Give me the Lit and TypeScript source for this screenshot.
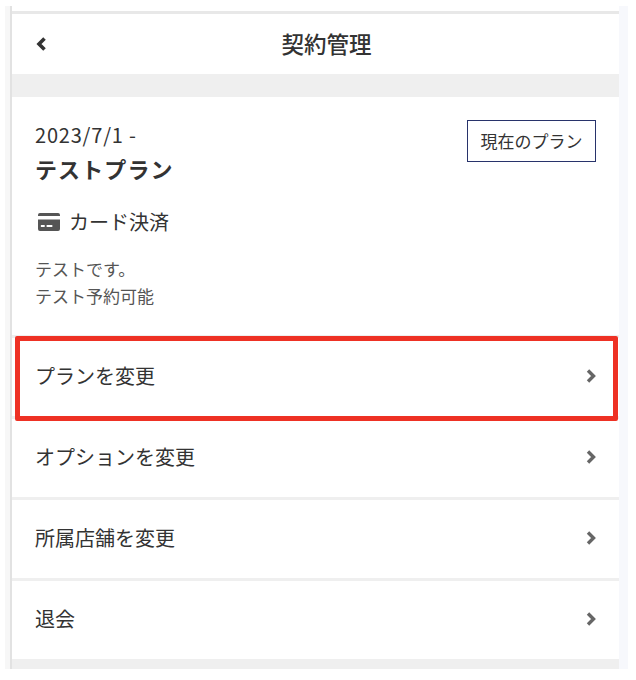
import { LitElement, html, css, svg } from "lit";
import { customElement } from "lit/decorators.js";

@customElement("app-root")
export class AppRoot extends LitElement {
  static styles = css`
    :host { display: block; width: 636px; height: 680px; background: #fff; font-family: "Noto Sans CJK JP", "Noto Sans", sans-serif; color: #333; position: relative; overflow: hidden; }
    .frame { display: flex; padding: 6px 8px 11px 5px; height: 680px; box-sizing: border-box; }
    .gutter-l { width: 5px; background: #f7f7f7; }
    .line-l { width: 2px; background: #e2e2e2; }
    .gutter-r { width: 9px; background: #f7f8fc; }
    .page { width: 607px; padding-top: 5px; display: flex; flex-direction: column; background: #fff; }
    .top { height: 3px; background: #e8e8e8; flex: none; }
    .head { height: 60px; flex: none; box-sizing: border-box; padding: 0 0 2px 22px; display: flex; align-items: center; justify-content: center; position: relative; font-size: 22.5px; font-weight: 500; color: #333; }
    .back { position: absolute; left: 22px; top: 22px; width: 14px; height: 16px; }
    .band { background: #efefef; height: 23px; flex: none; }
    .card { height: 238px; flex: none; box-sizing: border-box; padding: 22px 23px 0; position: relative; }
    .date { font-size: 20px; line-height: 32px; letter-spacing: 0.8px; color: #333; }
    .name { font-size: 22px; font-weight: 700; line-height: 34px; letter-spacing: 1.1px; }
    .pay { display: flex; align-items: center; gap: 9px; font-size: 20px; line-height: 32px; margin: 21px 0 0 3px; }
    .note { font-size: 17px; line-height: 27px; color: #555; margin-top: 17px; }
    .tag { position: absolute; right: 23px; top: 23px; width: 129px; height: 42px; box-sizing: border-box; border: 1.5px solid #28336b; display: flex; align-items: center; justify-content: center; font-size: 17px; padding-bottom: 2px; }
    .row { height: 81px; flex: none; box-sizing: border-box; padding: 0 22px 2px 23px; display: flex; align-items: center; justify-content: space-between; font-size: 20px; border-top: 3px solid #efefef; }
    .row span { position: relative; top: -1px; }
    .row svg { width: 12px; height: 16px; }
    .fill { flex: 1; background: #efefef; }
    .mark { position: absolute; left: 15px; top: 336px; width: 603px; height: 85px; box-sizing: border-box; border: 5px solid #ee3124; border-radius: 2px; }
  `;

  render() {
    const chev = svg`<path d="M3 2.5 L8.5 8 L3 13.5" fill="none" stroke="#666" stroke-width="3.4"/>`;
    const rows = ["プランを変更", "オプションを変更", "所属店舗を変更", "退会"];
    return html`
      <div class="frame">
        <div class="gutter-l"></div>
        <div class="line-l"></div>
        <div class="page">
          <div class="top"></div>
          <div class="head">
            <svg class="back" viewBox="0 0 14 16"><path d="M10.5 2.5 L5 8 L10.5 13.5" fill="none" stroke="#333" stroke-width="3.6"/></svg>
            契約管理
          </div>
          <div class="band"></div>
          <div class="card">
            <div class="date">2023/7/1 -</div>
            <div class="name">テストプラン</div>
            <div class="pay">
              <svg width="22" height="18" viewBox="0 0 23 18" preserveAspectRatio="none"><path fill-rule="evenodd" fill="#555" d="M2 0 H21 Q23 0 23 2 V16 Q23 18 21 18 H2 Q0 18 0 16 V2 Q0 0 2 0 Z M0 3 V6.5 H23 V3 Z M3 12 V14 H7 V12 Z M9 12 V14 H15 V12 Z"/></svg>
              カード決済
            </div>
            <div class="note">テストです。<br />テスト予約可能</div>
            <div class="tag">現在のプラン</div>
          </div>
          ${rows.map((r) => html`<div class="row"><span>${r}</span><svg viewBox="0 0 12 16">${chev}</svg></div>`)}
          <div class="fill"></div>
        </div>
        <div class="gutter-r"></div>
      </div>
      <div class="mark"></div>
    `;
  }
}
